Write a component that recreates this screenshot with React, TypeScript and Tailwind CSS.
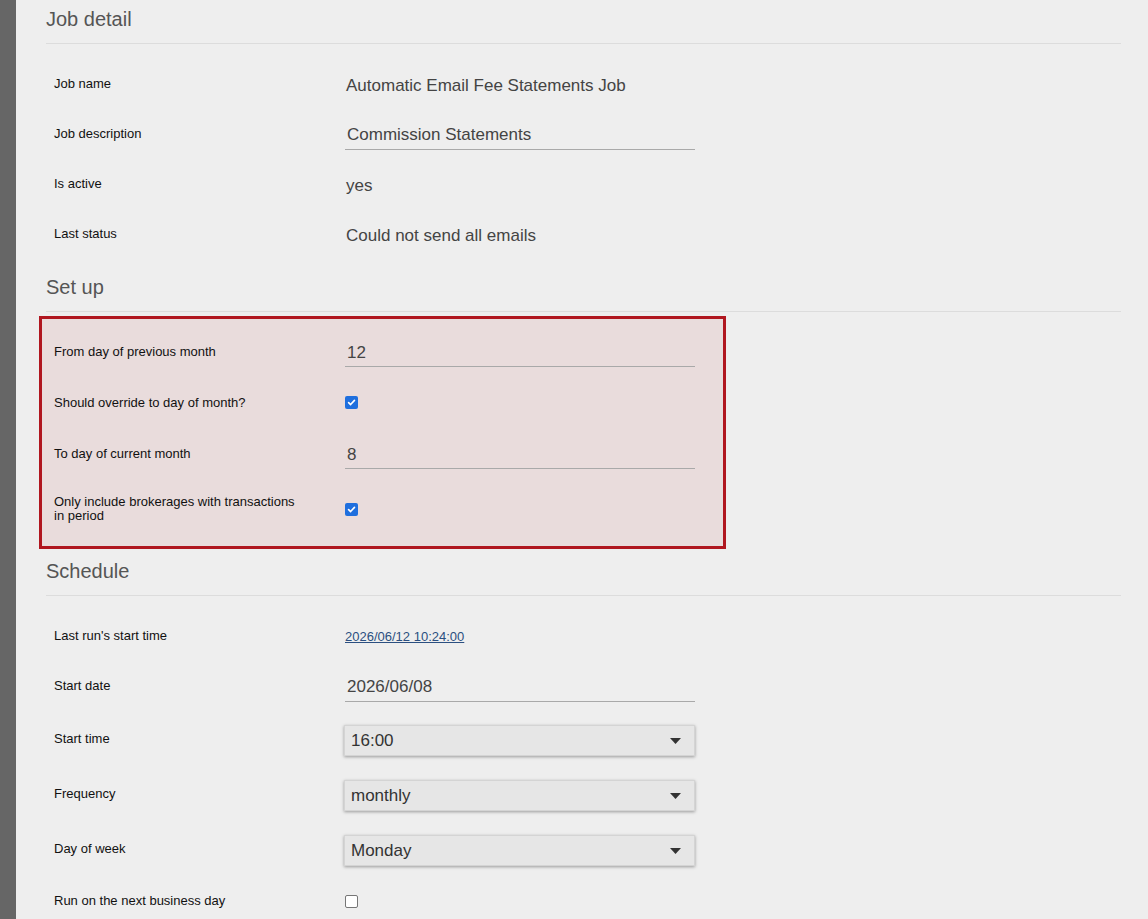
import React from 'react';

const font = "font-['Liberation_Sans',Arial,sans-serif]";

interface RowProps {
  label: string;
  h?: string;
  children?: React.ReactNode;
}

const Row: React.FC<RowProps> = ({ label, h = 'h-[50px]', children }) => (
  <div className={`flex items-center ${h}`}>
    <div className="w-[291px] shrink-0 pr-11 text-[13px] leading-[14px] text-[#111]">{label}</div>
    <div className="flex-1">{children}</div>
  </div>
);

const Heading: React.FC<{ title: string }> = ({ title }) => (
  <div>
    <h2 className="h-[28px] text-[20px] leading-[28px] text-[#555]">{title}</h2>
    <div className="mt-[10px] h-px bg-[#dcdcdc]" />
  </div>
);

const TextValue: React.FC<{ text: string }> = ({ text }) => (
  <div className="pl-px pt-1 text-[17px] leading-5 text-[#444]">{text}</div>
);

const Underlined: React.FC<{ text: string }> = ({ text }) => (
  <div className="mt-[1px] flex h-[30px] w-[350px] items-center border-b border-[#a9a9a9] pl-[2px] pt-[2px] text-[17px] text-[#444]">
    {text}
  </div>
);

const Check: React.FC<{ checked?: boolean }> = ({ checked }) =>
  checked ? (
    <div className="flex h-[13px] w-[13px] items-center justify-center rounded-[2px] bg-[#1f6fde]">
      <svg width="9" height="9" viewBox="0 0 10 10">
        <path d="M1.8 5.2 L4 7.3 L8.3 2.6" fill="none" stroke="#fff" strokeWidth="1.8" strokeLinecap="round" strokeLinejoin="round" />
      </svg>
    </div>
  ) : (
    <div className="h-[13px] w-[13px] rounded-[2px] border border-[#767676] bg-white" />
  );

const Select: React.FC<{ value: string }> = ({ value }) => (
  <div className="mt-1 flex h-[31px] w-[351px] -translate-x-px items-center justify-between border border-[#d4d4d4] bg-[#e6e6e6] pl-[6px] pr-[13px] text-[17px] text-[#333] shadow-[0_1px_3px_rgba(0,0,0,0.35)]">
    <span>{value}</span>
    <svg width="11" height="6" viewBox="0 0 11 6">
      <path d="M0 0 H11 L5.5 6 Z" fill="#333" />
    </svg>
  </div>
);

export default function App() {
  return (
    <div className={`flex min-h-[919px] w-full bg-[#eeeeee] ${font}`}>
      <div className="w-4 shrink-0 bg-[#666666]" />
      <div className="flex-1 pl-[30px] pr-[27px] pt-[5px]">
        <Heading title="Job detail" />
        <div className="mt-[15px] pl-2">
          <Row label="Job name">
            <TextValue text="Automatic Email Fee Statements Job" />
          </Row>
          <Row label="Job description">
            <Underlined text="Commission Statements" />
          </Row>
          <Row label="Is active">
            <TextValue text="yes" />
          </Row>
          <Row label="Last status">
            <TextValue text="Could not send all emails" />
          </Row>
        </div>

        <div className="mt-[14px]">
          <Heading title="Set up" />
        </div>
        <div className="-ml-[7px] mt-1 w-[687px] border-[3px] border-[#b0161f] bg-[#e9dcdc] pb-[7px] pl-[12px] pt-[7px]">
          <Row label="From day of previous month" h="h-[51px]">
            <Underlined text="12" />
          </Row>
          <Row label="Should override to day of month?" h="h-[51px]">
            <Check checked />
          </Row>
          <Row label="To day of current month" h="h-[51px]">
            <Underlined text="8" />
          </Row>
          <Row label="Only include brokerages with transactions in period" h="h-[60px]">
            <Check checked />
          </Row>
        </div>

        <div className="mt-[8px]">
          <Heading title="Schedule" />
        </div>
        <div className="mt-[15px] pl-2">
          <Row label="Last run's start time">
            <a href="#" className="pt-1 text-[13px] text-[#2b4f80] underline">
              2026/06/12 10:24:00
            </a>
          </Row>
          <Row label="Start date">
            <Underlined text="2026/06/08" />
          </Row>
          <Row label="Start time" h="h-[55px]">
            <Select value="16:00" />
          </Row>
          <Row label="Frequency" h="h-[55px]">
            <Select value="monthly" />
          </Row>
          <Row label="Day of week" h="h-[55px]">
            <Select value="Monday" />
          </Row>
          <Row label="Run on the next business day">
            <Check />
          </Row>
        </div>
      </div>
    </div>
  );
}
